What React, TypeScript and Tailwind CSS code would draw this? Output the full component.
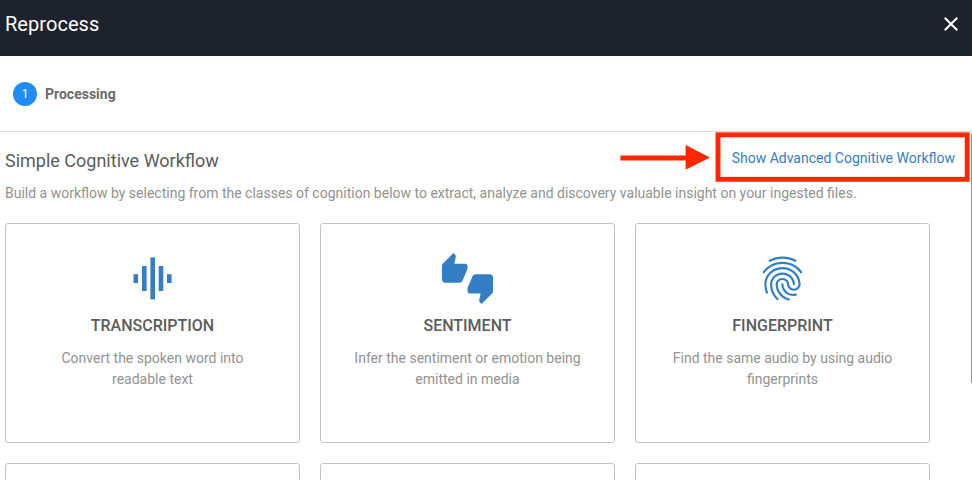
import { MdClose, MdFingerprint, MdThumbsUpDown } from 'react-icons/md';
import type { ReactNode } from 'react';

function WaveIcon() {
  return (
    <svg className="mt-0.5" width="40" height="44" viewBox="0 0 40 44" fill="currentColor">
      <rect x="0.5" y="17.2" width="4.6" height="8.8" />
      <rect x="9" y="9" width="4.6" height="25" />
      <rect x="17.4" y="0.4" width="4.6" height="42" />
      <rect x="25.7" y="9" width="4.6" height="25" />
      <rect x="34" y="17.2" width="4.6" height="8.8" />
    </svg>
  );
}

type CardProps = { icon?: ReactNode; title?: string; lines?: string[] };

function Card({ icon, title, lines = [] }: CardProps) {
  return (
    <div className="flex h-[220px] flex-col items-center rounded-[3px] border border-[#c3c3c3] pt-7 text-center">
      <div className="flex h-[52px] items-center justify-center text-[#347fc4]">{icon}</div>
      <h2 className="mt-[11px] text-[16px] leading-[22px] font-medium text-[#5c5c5c]">{title}</h2>
      <p className="mt-[11px] text-[14px] leading-[21px] text-[#929292]">
        {lines.map((line) => (
          <span key={line} className="block">{line}</span>
        ))}
      </p>
    </div>
  );
}

/* Red callout arrow and frame laid over the workflow link. */
function Callout() {
  return (
    <svg className="pointer-events-none absolute top-[130px] left-[616px]" width="356" height="54" viewBox="0 0 356 54">
      <path fill="#ff2600" d="M4.4 25.4H69.6V15L94 27.5 69.6 39.8V30.4H4.4Z" />
      <rect x="102" y="4.8" width="249.2" height="44.5" fill="none" stroke="#ff2600" strokeWidth="4.9" />
    </svg>
  );
}

export default function App() {
  return (
    <div className="relative h-[480px] w-[972px] overflow-hidden bg-white font-[Roboto,sans-serif]">
      <header className="flex h-14 items-center justify-between bg-[#1e222d] pr-[9px] pb-2 pl-[5px] text-white">
        <h1 className="text-[20px] leading-6 tracking-[0.05px]">Reprocess</h1>
        <MdClose size={24} />
      </header>
      <div className="flex h-[76px] items-center border-b border-[#d8d8d8] pl-[13px]">
        <span className="flex size-6 items-center justify-center rounded-full bg-[#1f8cf5] text-[12px] text-white">1</span>
        <span className="mt-0.5 ml-2 text-[14px] font-bold text-[#6b6b6b]">Processing</span>
      </div>
      <main className="pl-[5px]">
        <div className="flex h-[50px] items-start justify-between pt-[1px] pr-[17px]">
          <h2 className="mt-4 text-[18px] leading-6 text-[#5c5c5c]">Simple Cognitive Workflow</h2>
          <a className="mt-3.5 text-[14px] leading-[22px] whitespace-nowrap text-[#347fc4]">Show Advanced Cognitive Workflow</a>
        </div>
        <p className="h-[41px] text-[14px] leading-[22px] text-[#929292]">
          Build a workflow by selecting from the classes of cognition below to extract, analyze and discovery valuable insight on your ingested files.
        </p>
        <div className="grid grid-cols-[295px_295px_295px] gap-5">
          <Card icon={<WaveIcon />} title="TRANSCRIPTION" lines={['Convert the spoken word into', 'readable text']} />
          <Card icon={<MdThumbsUpDown className="mt-px" size={51} />} title="SENTIMENT" lines={['Infer the sentiment or emotion being', 'emitted in media']} />
          <Card icon={<MdFingerprint size={53} />} title="FINGERPRINT" lines={['Find the same audio by using audio', 'fingerprints']} />
          <Card />
          <Card />
          <Card />
        </div>
      </main>
      <Callout />
      <div className="absolute top-[134px] right-0 h-[249px] w-px bg-[#959595]" />
    </div>
  );
}
